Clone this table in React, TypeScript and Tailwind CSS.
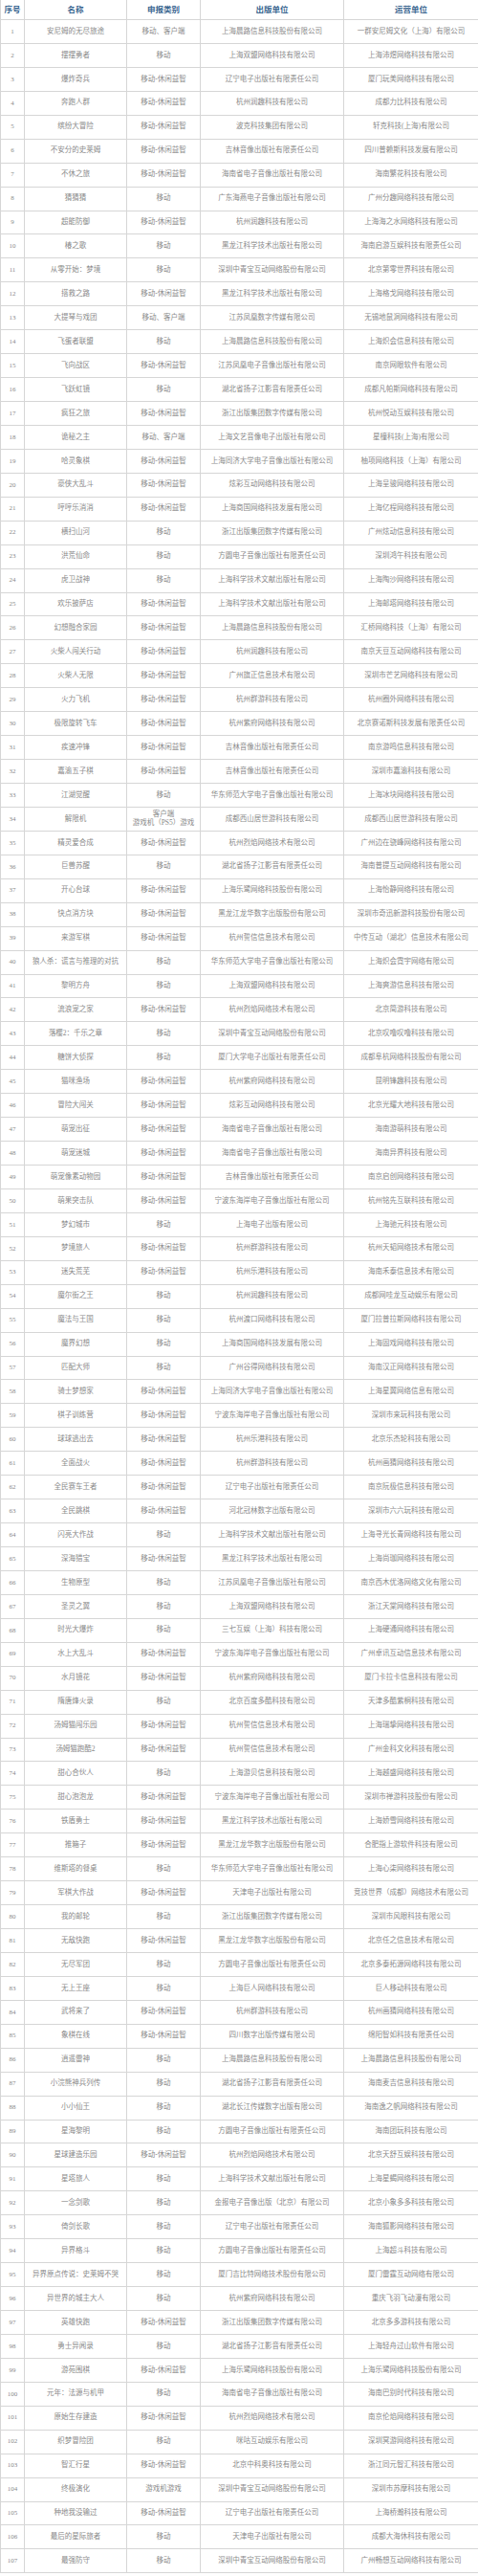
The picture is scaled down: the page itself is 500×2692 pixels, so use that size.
const ROWS: [string, string, string, string][] = [
  ["安尼姆的无尽旅途", "移动、客户端", "上海晨路信息科技股份有限公司", "一群安尼姆文化（上海）有限公司"],
  ["摆摆勇者", "移动", "上海双盟网络科技有限公司", "上海沛煜网络科技有限公司"],
  ["爆炸奇兵", "移动-休闲益智", "辽宁电子出版社有限责任公司", "厦门玩美网络科技有限公司"],
  ["奔跑人群", "移动-休闲益智", "杭州润趣科技有限公司", "成都力比科技有限公司"],
  ["缤纷大冒险", "移动-休闲益智", "波克科技集团有限公司", "轩克科技(上海)有限公司"],
  ["不安分的史莱姆", "移动-休闲益智", "吉林音像出版社有限责任公司", "四川普赖斯科技发展有限公司"],
  ["不休之旅", "移动-休闲益智", "海南省电子音像出版社有限公司", "海南繁花科技有限公司"],
  ["猜猜猜", "移动", "广东海燕电子音像出版社有限公司", "广州分趣网络科技有限公司"],
  ["超能防御", "移动-休闲益智", "杭州润趣科技有限公司", "上海海之水网络科技有限公司"],
  ["椿之歌", "移动", "黑龙江科学技术出版社有限公司", "海南启游互娱科技有限责任公司"],
  ["从零开始：梦境", "移动", "深圳中青宝互动网络股份有限公司", "北京第零世界科技有限公司"],
  ["搭救之路", "移动-休闲益智", "黑龙江科学技术出版社有限公司", "上海格戈网络科技有限公司"],
  ["大提琴与戏团", "移动、客户端", "江苏凤凰数字传媒有限公司", "无锡地鼠洞网络科技有限公司"],
  ["飞蛋者联盟", "移动", "上海晨路信息科技股份有限公司", "上海炽会信息科技有限公司"],
  ["飞向战区", "移动-休闲益智", "江苏凤凰电子音像出版社有限公司", "南京网眼软件有限公司"],
  ["飞跃虹镜", "移动", "湖北省扬子江影音有限责任公司", "成都凡帕斯网络科技有限公司"],
  ["疯狂之旅", "移动-休闲益智", "浙江出版集团数字传媒有限公司", "杭州悦动互娱科技有限公司"],
  ["诡秘之主", "移动、客户端", "上海文艺音像电子出版社有限公司", "星橦科技(上海)有限公司"],
  ["哈灵象棋", "移动-休闲益智", "上海同济大学电子音像出版社有限公司", "柚项网络科技（上海）有限公司"],
  ["豪侠大乱斗", "移动-休闲益智", "炫彩互动网络科技有限公司", "上海呈骏网络科技有限公司"],
  ["哼哼乐消消", "移动-休闲益智", "上海商国网络科技发展有限公司", "上海亿程网络科技有限公司"],
  ["横扫山河", "移动", "浙江出版集团数字传媒有限公司", "广州炫动信息科技有限公司"],
  ["洪荒仙命", "移动", "方圆电子音像出版社有限责任公司", "深圳鸿午科技有限公司"],
  ["虎卫战神", "移动", "上海科学技术文献出版社有限公司", "上海陶沙网络科技有限公司"],
  ["欢乐披萨店", "移动-休闲益智", "上海科学技术文献出版社有限公司", "上海邮塔网络科技有限公司"],
  ["幻想融合家园", "移动-休闲益智", "上海晨路信息科技股份有限公司", "汇桥网络科技（上海）有限公司"],
  ["火柴人闯关行动", "移动-休闲益智", "杭州润趣科技有限公司", "南京天豆互动网络科技有限公司"],
  ["火柴人无限", "移动-休闲益智", "广州旗正信息技术有限公司", "深圳市芒艺网络科技有限公司"],
  ["火力飞机", "移动-休闲益智", "杭州群游科技有限公司", "杭州圈外网络科技有限公司"],
  ["极限旋转飞车", "移动-休闲益智", "杭州紫府网络科技有限公司", "北京赛诺斯科技发展有限责任公司"],
  ["疾速冲锋", "移动-休闲益智", "吉林音像出版社有限责任公司", "南京游鸣信息科技有限公司"],
  ["嘉渝五子棋", "移动-休闲益智", "吉林音像出版社有限责任公司", "深圳市嘉渝科技有限公司"],
  ["江湖觉醒", "移动", "华东师范大学电子音像出版社有限公司", "上海冰块网络科技有限公司"],
  ["解限机", "客户端\n游戏机（PS5）游戏", "成都西山居世游科技有限公司", "成都西山居世游科技有限公司"],
  ["精灵爱合成", "移动-休闲益智", "杭州烈焰网络技术有限公司", "广州边在骁峰网络科技有限公司"],
  ["巨兽苏醒", "移动", "湖北省扬子江影音有限责任公司", "海南普提互动网络科技有限公司"],
  ["开心台球", "移动-休闲益智", "上海乐鹭网络科技股份有限公司", "上海怡静网络科技有限公司"],
  ["快点消方块", "移动-休闲益智", "黑龙江龙华数字出版股份有限公司", "深圳市奇迅新游科技股份有限公司"],
  ["来游军棋", "移动-休闲益智", "杭州誓信信息技术有限公司", "中传互动（湖北）信息技术有限公司"],
  ["狼人杀：谎言与推理的对抗", "移动", "华东师范大学电子音像出版社有限公司", "上海炽会霓宇网络有限公司"],
  ["黎明方舟", "移动", "上海双盟网络科技有限公司", "上海爽游信息科技有限公司"],
  ["流浪宠之家", "移动-休闲益智", "杭州烈焰网络技术有限公司", "北京简游科技有限公司"],
  ["落樱2：千乐之章", "移动", "深圳中青宝互动网络股份有限公司", "北京叹噜叹噜科技有限公司"],
  ["糖饼大侦探", "移动", "厦门大学电子出版社有限责任公司", "成都阜杭网络科技股份有限公司"],
  ["猫咪渔场", "移动-休闲益智", "杭州紫府网络科技有限公司", "昆明锋趣科技有限公司"],
  ["冒险大闯关", "移动-休闲益智", "炫彩互动网络科技有限公司", "北京光耀大地科技有限公司"],
  ["萌宠出征", "移动-休闲益智", "海南省电子音像出版社有限公司", "海南游萌科技有限公司"],
  ["萌宠迷城", "移动-休闲益智", "海南省电子音像出版社有限公司", "海南异界科技有限公司"],
  ["萌宠像素动物园", "移动-休闲益智", "吉林音像出版社有限责任公司", "南京启创网络科技有限公司"],
  ["萌果突击队", "移动-休闲益智", "宁波东海岸电子音像出版社有限公司", "杭州铭先互联科技有限公司"],
  ["梦幻城市", "移动", "上海电子出版有限公司", "上海驰元科技有限公司"],
  ["梦境旅人", "移动-休闲益智", "杭州群游科技有限公司", "杭州天韬网络技术有限公司"],
  ["迷失荒芜", "移动-休闲益智", "杭州乐港科技有限公司", "海南禾泰信息技术有限公司"],
  ["魔尔街之王", "移动", "杭州润趣科技有限公司", "成都网哇龙互动娱乐有限公司"],
  ["魔法与王国", "移动", "杭州渡口网络科技有限公司", "厦门拉普拉斯网络科技有限公司"],
  ["魔界幻想", "移动", "上海商国网络科技发展有限公司", "上海固戏网络科技有限公司"],
  ["匹配大师", "移动", "广州谷得网络科技有限公司", "海南汉正网络科技有限公司"],
  ["骑士梦想家", "移动-休闲益智", "上海同济大学电子音像出版社有限公司", "上海星翼网络信息有限公司"],
  ["棋子训练营", "移动-休闲益智", "宁波东海岸电子音像出版社有限公司", "深圳市来玩科技有限公司"],
  ["球球逃出去", "移动-休闲益智", "杭州乐港科技有限公司", "北京乐杰轮科技有限公司"],
  ["全面战火", "移动-休闲益智", "杭州群游科技有限公司", "杭州画猜网络科技有限公司"],
  ["全民赛车王者", "移动-休闲益智", "辽宁电子出版社有限责任公司", "南京阮极信息科技有限公司"],
  ["全民跳棋", "移动-休闲益智", "河北冠林数字出版有限公司", "深圳市六六玩科技有限公司"],
  ["闪亮大作战", "移动", "上海科学技术文献出版社有限公司", "上海寻光长青网络科技有限公司"],
  ["深海猎宝", "移动-休闲益智", "黑龙江科学技术出版社有限公司", "上海尚珈网络科技有限公司"],
  ["生物原型", "移动", "江苏凤凰电子音像出版社有限公司", "南京西木优洛网络文化有限公司"],
  ["圣灵之翼", "移动", "上海双盟网络科技有限公司", "浙江天棠网络科技有限公司"],
  ["时光大爆炸", "移动", "三七互娱（上海）科技有限公司", "上海硬通网络科技有限公司"],
  ["水上大乱斗", "移动-休闲益智", "宁波东海岸电子音像出版社有限公司", "广州卓讯互动信息技术有限公司"],
  ["水月镜花", "移动-休闲益智", "杭州紫府网络科技有限公司", "厦门卡拉卡信息科技有限公司"],
  ["隋唐烽火录", "移动", "北京百度多酷科技有限公司", "天津多酷紫桐科技有限公司"],
  ["汤姆猫闯乐园", "移动-休闲益智", "杭州誓信信息技术有限公司", "上海瑞挚网络科技有限公司"],
  ["汤姆猫跑酷2", "移动-休闲益智", "杭州誓信信息技术有限公司", "广州金科文化科技有限公司"],
  ["甜心合伙人", "移动", "上海游贝信息科技有限公司", "上海越盛网络科技有限公司"],
  ["甜心泡泡龙", "移动-休闲益智", "宁波东海岸电子音像出版社有限公司", "深圳市禅游科技股份有限公司"],
  ["铁盾勇士", "移动-休闲益智", "黑龙江科学技术出版社有限公司", "上海娇雪网络科技有限公司"],
  ["推箱子", "移动-休闲益智", "黑龙江龙华数字出版股份有限公司", "合肥指上游软件科技有限公司"],
  ["维斯塔的餐桌", "移动", "华东师范大学电子音像出版社有限公司", "上海心柒网络科技有限公司"],
  ["军棋大作战", "移动-休闲益智", "天津电子出版社有限公司", "竞技世界（成都）网络技术有限公司"],
  ["我的邮轮", "移动", "浙江出版集团数字传媒有限公司", "深圳市风眼科技有限公司"],
  ["无敌快跑", "移动-休闲益智", "黑龙江龙华数字出版股份有限公司", "北京任之信息技术有限公司"],
  ["无尽军团", "移动", "方圆电子音像出版社有限责任公司", "北京多泰拓源网络科技有限公司"],
  ["无上王座", "移动", "上海巨人网络科技有限公司", "巨人移动科技有限公司"],
  ["武将来了", "移动-休闲益智", "杭州群游科技有限公司", "杭州画猜网络科技有限公司"],
  ["象棋在线", "移动-休闲益智", "四川数字出版传媒有限公司", "绵阳智如科技有限责任公司"],
  ["逍遥雷神", "移动", "上海晨路信息科技股份有限公司", "上海晨路信息科技股份有限公司"],
  ["小浣熊神兵列传", "移动", "湖北省扬子江影音有限责任公司", "海南麦吉信息科技有限公司"],
  ["小小仙王", "移动", "湖北长江传媒数字出版有限公司", "海南逸之帆网络科技有限公司"],
  ["星海黎明", "移动", "方圆电子音像出版社有限责任公司", "海南团玩科技有限公司"],
  ["星球建造乐园", "移动-休闲益智", "杭州烈焰网络技术有限公司", "北京天舒互娱科技有限公司"],
  ["星塔旅人", "移动", "上海科学技术文献出版社有限公司", "上海星蝎网络科技有限公司"],
  ["一念剑歌", "移动", "金报电子音像出版（北京）有限公司", "北京小象多多科技有限公司"],
  ["倚剑长歌", "移动", "辽宁电子出版社有限责任公司", "海南狐影网络科技有限公司"],
  ["异界格斗", "移动", "方圆电子音像出版社有限责任公司", "上海超斗科技有限公司"],
  ["异界原点传说：史莱姆不哭", "移动", "厦门吉比特网络技术股份有限公司", "厦门雷霆互动网络有限公司"],
  ["异世界的城主大人", "移动", "杭州紫府网络科技有限公司", "重庆飞羽飞动漫有限公司"],
  ["英雄快跑", "移动-休闲益智", "浙江出版集团数字传媒有限公司", "北京多多游科技有限公司"],
  ["勇士异闻录", "移动", "湖北省扬子江影音有限责任公司", "上海轻舟过山软件有限公司"],
  ["游苑围棋", "移动-休闲益智", "上海乐鹭网络科技股份有限公司", "上海乐鹭网络科技股份有限公司"],
  ["元年：法源与机甲", "移动", "海南省电子音像出版社有限公司", "海南巴别时代科技有限公司"],
  ["原始生存建造", "移动-休闲益智", "杭州烈焰网络技术有限公司", "南京伦焰网络科技有限公司"],
  ["织梦冒险团", "移动", "咪咕互动娱乐有限公司", "深圳冥游网络科技有限公司"],
  ["智汇行星", "移动-休闲益智", "北京中科奥科技有限公司", "浙江同元智汇科技有限公司"],
  ["终极演化", "游戏机游戏", "深圳中青宝互动网络股份有限公司", "深圳市苏摩科技有限公司"],
  ["种地我没输过", "移动-休闲益智", "辽宁电子出版社有限责任公司", "上海桥瀚科技有限公司"],
  ["最后的星际旅者", "移动", "天津电子出版社有限公司", "成都大海休科技有限公司"],
  ["最强防守", "移动", "深圳中青宝互动网络股份有限公司", "广州畅想互动网络科技有限公司"],
];

const HEADERS = ["序号", "名称", "申报类别", "出版单位", "运营单位"];

export default function App() {
  return (
    <div
      className="w-[500px] bg-white border-l border-[#d6d6d6] text-[#8a8a8a]"
      style={{ fontFamily: '"Liberation Serif", "Noto Sans CJK SC", serif' }}
    >
      <div className="grid h-[21px] grid-cols-[25px_107px_77px_150px_141px] border-b border-[#d6d6d6] text-[8.5px] font-bold text-[#3a6690]">
        {HEADERS.map((h) => (
          <div
            key={h}
            className="flex items-center justify-center border-r border-[#d6d6d6] leading-none"
          >
            {h}
          </div>
        ))}
      </div>

      {ROWS.map((row, i) => (
        <div
          key={i}
          className="grid h-[24.94px] grid-cols-[25px_107px_77px_150px_141px] border-b border-[#d6d6d6] text-[7.5px]"
        >
          <div className="flex items-center justify-center border-r border-[#d6d6d6] text-[7px]">
            {i + 1}
          </div>
          {row.map((cell, j) => (
            <div
              key={j}
              className="flex items-center justify-center whitespace-pre-line border-r border-[#d6d6d6] text-center leading-[1.15]"
            >
              {cell}
            </div>
          ))}
        </div>
      ))}
    </div>
  );
}
